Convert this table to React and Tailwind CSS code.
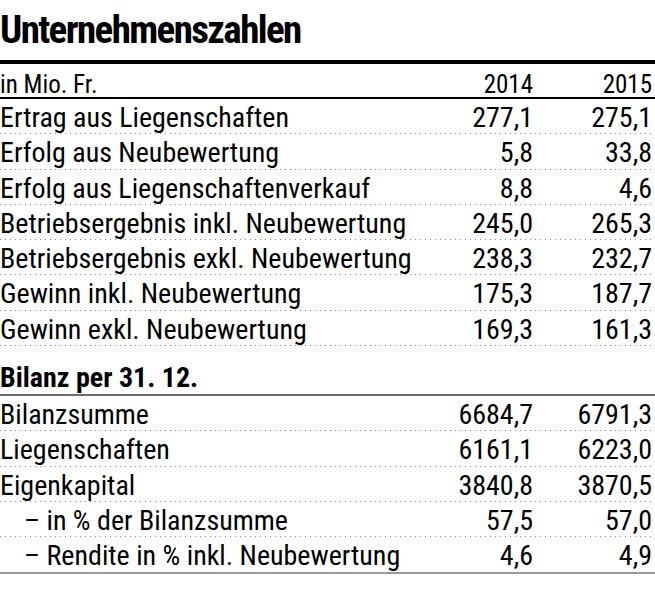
const earnings = [
  ['Ertrag aus Liegenschaften', '277,1', '275,1'],
  ['Erfolg aus Neubewertung', '5,8', '33,8'],
  ['Erfolg aus Liegenschaftenverkauf', '8,8', '4,6'],
  ['Betriebsergebnis inkl. Neubewertung', '245,0', '265,3'],
  ['Betriebsergebnis exkl. Neubewertung', '238,3', '232,7'],
  ['Gewinn inkl. Neubewertung', '175,3', '187,7'],
  ['Gewinn exkl. Neubewertung', '169,3', '161,3'],
]

const balance = [
  ['Bilanzsumme', '6684,7', '6791,3'],
  ['Liegenschaften', '6161,1', '6223,0'],
  ['Eigenkapital', '3840,8', '3870,5'],
  ['– in % der Bilanzsumme', '57,5', '57,0', true],
  ['– Rendite in % inkl. Neubewertung', '4,6', '4,9', true, true],
]

function Row({ label, a, b, indent, last }) {
  return (
    <div
      className={
        'grid grid-cols-[1fr_119px_119px] pr-[3px] pt-[4px] leading-[30px] text-[28px] whitespace-nowrap ' +
        (last
          ? 'h-[37px] border-b-2 border-[#9a9a9a]'
          : 'h-[35.3px] bg-[linear-gradient(to_right,#8a8a8a_1px,transparent_1px)] bg-[length:5px_1px] bg-repeat-x bg-bottom')
      }
    >
      <span className={indent ? 'pl-[24px]' : ''}>{label}</span>
      <span className="text-right">{a}</span>
      <span className="text-right">{b}</span>
    </div>
  )
}

export default function App() {
  return (
    <div className="w-[655px] h-[591px] bg-white text-black font-['Roboto_Condensed',sans-serif]">
      <div className="h-[64px] border-b-4 border-black pt-[7px]">
        <h1 className="text-[39px] leading-[46px] font-bold tracking-[-1.6px]">Unternehmenszahlen</h1>
      </div>
      <div className="grid grid-cols-[1fr_119px_119px] pr-[3px] h-[35px] pt-[8px] leading-[26px] text-[25px] border-b-2 border-black">
        <span>in Mio. Fr.</span>
        <span className="text-right">2014</span>
        <span className="text-right">2015</span>
      </div>
      {earnings.map(([l, a, b]) => (
        <Row key={l} label={l} a={a} b={b} />
      ))}
      <div className="h-[50px] pt-[16px] border-b-2 border-[#6e6e6e]">
        <div className="text-[28px] leading-[32px] font-bold">Bilanz per 31. 12.</div>
      </div>
      {balance.map(([l, a, b, indent, last]) => (
        <Row key={l} label={l} a={a} b={b} indent={indent} last={last} />
      ))}
    </div>
  )
}
